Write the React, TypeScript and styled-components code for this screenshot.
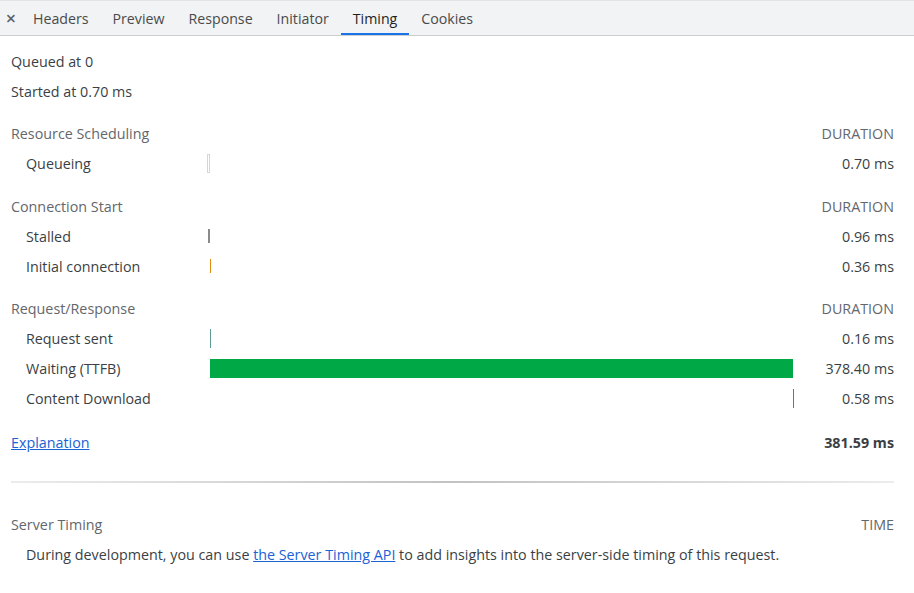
import styled, { createGlobalStyle } from "styled-components";

const GlobalStyle = createGlobalStyle`
  html, body {
    margin: 0;
    padding: 0;
    background: #ffffff;
  }
  body {
    font-family: "Open Sans", "Noto Sans", sans-serif;
    font-size: 14.3px;
    color: #3a3f45;
  }
`;

const TabBar = styled.div`
  display: flex;
  align-items: stretch;
  height: 34px;
  background: #f1f3f4;
  border-top: 1px solid #e3e3e3;
  border-bottom: 1px solid #cbcdd1;
`;

const CloseButton = styled.div`
  width: 20px;
  display: flex;
  align-items: center;
  justify-content: center;
  padding-left: 1px;
  color: #5f6368;
  font-size: 18px;
  font-weight: 600;
`;

const Tab = styled.div<{ $active?: boolean }>`
  display: flex;
  align-items: center;
  padding: 0 12px;
  color: ${(p) => (p.$active ? "#1f1f1f" : "#4a4a4a")};
  font-size: 14.2px;
  box-shadow: ${(p) => (p.$active ? "inset 0 -2px 0 #1a73e8" : "none")};
`;

const Panel = styled.div`
  padding: 10px 20px 0 11px;
`;

const Row = styled.div<{ $indent?: boolean; $gap?: number }>`
  display: grid;
  grid-template-columns: 196px 1fr 99px;
  align-items: center;
  height: 30px;
  margin-top: ${(p) => p.$gap ?? 0}px;
  padding-left: ${(p) => (p.$indent ? "15px" : "0")};
`;

const Label = styled.div<{ $muted?: boolean }>`
  color: ${(p) => (p.$muted ? "#63676c" : "#3a3f45")};
  white-space: nowrap;
`;

const Value = styled.div<{ $muted?: boolean; $bold?: boolean }>`
  text-align: right;
  color: ${(p) => (p.$muted ? "#63676c" : "#3a3f45")};
  font-weight: ${(p) => (p.$bold ? 700 : 400)};
  white-space: nowrap;
`;

const Track = styled.div`
  position: relative;
  height: 100%;
  margin-left: -15px;
`;

const TrackPlain = styled.div`
  position: relative;
  height: 100%;
`;

type Kind = "queue" | "stalled" | "conn" | "sent" | "wait" | "download";

const barColors: Record<Kind, string> = {
  queue: "#ffffff",
  stalled: "#8a8a8a",
  conn: "#e08a10",
  sent: "#5e9a96",
  wait: "#00a846",
  download: "#1a8fd0",
};

const Bar = styled.div<{ $kind: Kind }>`
  position: absolute;
  top: ${(p) => (p.$kind === "stalled" || p.$kind === "conn" ? "8px" : "5px")};
  bottom: ${(p) => (p.$kind === "stalled" || p.$kind === "conn" ? "8px" : "6px")};
  min-width: ${(p) => (p.$kind === "queue" ? "3px" : p.$kind === "stalled" ? "2px" : "1px")};
  box-sizing: border-box;
  background: ${(p) => barColors[p.$kind]};
  border: ${(p) => (p.$kind === "queue" ? "1px solid #d6d6d6" : "none")};
`;

const Link = styled.a`
  color: #1a62d6;
  text-decoration: underline;
  cursor: pointer;
`;

const Divider = styled.div`
  height: 2px;
  margin: 24px 0 26px;
  background: linear-gradient(to right, #ececec, #c2c2c2 50%, #ececec);
`;

const Note = styled.div`
  height: 30px;
  display: flex;
  align-items: center;
  padding-left: 15px;
  white-space: nowrap;
`;

interface Phase {
  label: string;
  start: number;
  dur: number;
  kind: Kind;
}

const TOTAL = 381.59;

const sections: { title: string; phases: Phase[] }[] = [
  {
    title: "Resource Scheduling",
    phases: [{ label: "Queueing", start: 0, dur: 0.7, kind: "queue" }],
  },
  {
    title: "Connection Start",
    phases: [
      { label: "Stalled", start: 0.7, dur: 0.96, kind: "stalled" },
      { label: "Initial connection", start: 1.66, dur: 0.36, kind: "conn" },
    ],
  },
  {
    title: "Request/Response",
    phases: [
      { label: "Request sent", start: 2.02, dur: 0.16, kind: "sent" },
      { label: "Waiting (TTFB)", start: 2.18, dur: 378.4, kind: "wait" },
      { label: "Content Download", start: 380.58, dur: 0.58, kind: "download" },
    ],
  },
];

const tabs = ["Headers", "Preview", "Response", "Initiator", "Timing", "Cookies"];

export default function App() {
  return (
    <>
      <GlobalStyle />
      <TabBar>
        <CloseButton>×</CloseButton>
        {tabs.map((t) => (
          <Tab key={t} $active={t === "Timing"}>
            {t}
          </Tab>
        ))}
      </TabBar>
      <Panel>
        <Row>
          <Label>Queued at 0</Label>
        </Row>
        <Row>
          <Label>Started at 0.70 ms</Label>
        </Row>
        {sections.map((s) => (
          <div key={s.title}>
            <Row $gap={12.5}>
              <Label $muted>{s.title}</Label>
              <div />
              <Value $muted>DURATION</Value>
            </Row>
            {s.phases.map((ph) => (
              <Row key={ph.label} $indent>
                <Label>{ph.label}</Label>
                <Track>
                  <Bar
                    $kind={ph.kind}
                    style={{
                      left: `${((ph.start / TOTAL) * 100).toFixed(3)}%`,
                      width: `${((ph.dur / TOTAL) * 100).toFixed(3)}%`,
                    }}
                  />
                </Track>
                <Value>{ph.dur.toFixed(2)} ms</Value>
              </Row>
            ))}
          </div>
        ))}
        <Row $gap={13.5}>
          <Label>
            <Link>Explanation</Link>
          </Label>
          <TrackPlain />
          <Value $bold>{TOTAL.toFixed(2)} ms</Value>
        </Row>
        <Divider />
        <Row>
          <Label $muted>Server Timing</Label>
          <div />
          <Value $muted>TIME</Value>
        </Row>
        <Note>
          During development, you can use&nbsp;<Link>the Server Timing API</Link>&nbsp;to add insights
          into the server-side timing of this request.
        </Note>
      </Panel>
    </>
  );
}
